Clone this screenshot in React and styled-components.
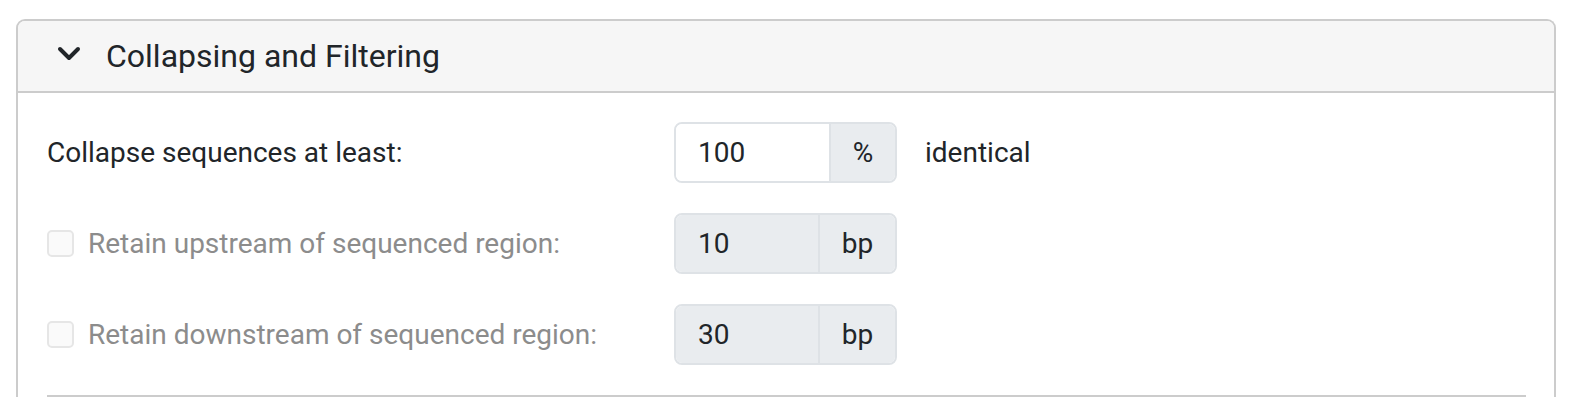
import React from "react";
import styled, { createGlobalStyle } from "styled-components";

const Global = createGlobalStyle`
  html, body { margin: 0; padding: 0; background: #fff; }
  body { font-family: Roboto, "Liberation Sans", sans-serif; color: #212529; }
`;

const Page = styled.div`
  padding: 19px 14px 0 16px;
`;

const Card = styled.section`
  border: 2px solid #cccccc;
  border-bottom: none;
  border-radius: 9px 9px 0 0;
  overflow: hidden;
`;

const Header = styled.div`
  display: flex;
  align-items: center;
  gap: 25px;
  height: 70px;
  padding: 0 0 0 39px;
  background: #f6f6f6;
  border-bottom: 2px solid #cccccc;
`;

const Chevron = styled.svg`
  width: 24px;
  height: 16px;
  margin-top: -4px;
  flex: none;
`;

const Title = styled.h2`
  margin: 0;
  font-size: 32px;
  font-weight: 400;
  color: #212529;
`;

const Body = styled.div`
  padding: 29px 28px 0 29px;
  display: flex;
  flex-direction: column;
`;

const Row = styled.div`
  display: flex;
  align-items: center;
  height: 61px;
  margin-bottom: 30px;
`;

const Label = styled.label`
  display: flex;
  align-items: center;
  gap: 14px;
  width: 627px;
  flex: none;
  font-size: 28px;
  color: ${(p) => (p.$disabled ? "#8c8c8c" : "#212529")};
`;

const Check = styled.span`
  width: 27px;
  height: 27px;
  box-sizing: border-box;
  border: 2px solid #e6e6e6;
  border-radius: 5px;
  background: #fafafa;
  flex: none;
`;

const Group = styled.div`
  display: flex;
  width: 223px;
  height: 61px;
  box-sizing: border-box;
  border: 2px solid #dee2e6;
  border-radius: 8px;
  overflow: hidden;
  flex: none;
`;

const Value = styled.div`
  flex: 1;
  display: flex;
  align-items: center;
  padding-left: 22px;
  font-size: 28px;
  background: ${(p) => (p.$disabled ? "#e9ecef" : "#ffffff")};
  color: #212529;
`;

const Addon = styled.div`
  width: ${(p) => p.$w}px;
  flex: none;
  display: flex;
  align-items: center;
  justify-content: center;
  border-left: 2px solid #dee2e6;
  background: #e9ecef;
  font-size: 28px;
  color: #212529;
`;

const After = styled.span`
  margin-left: 28px;
  font-size: 28px;
  color: #212529;
`;

const Divider = styled.hr`
  margin: 0;
  border: none;
  height: 2px;
  background: #cccccc;
`;

export default function App() {
  return (
    <>
      <Global />
      <Page>
        <Card>
          <Header>
            <Chevron viewBox="0 0 24 16">
              <path d="M3 3 L12 12 L21 3" fill="none" stroke="#212529" strokeWidth="4" strokeLinecap="round" strokeLinejoin="round" />
            </Chevron>
            <Title>Collapsing and Filtering</Title>
          </Header>
          <Body>
            <Row>
              <Label>Collapse sequences at least:</Label>
              <Group>
                <Value>100</Value>
                <Addon $w={64}>%</Addon>
              </Group>
              <After>identical</After>
            </Row>
            <Row>
              <Label $disabled>
                <Check />
                Retain upstream of sequenced region:
              </Label>
              <Group>
                <Value $disabled>10</Value>
                <Addon $w={75}>bp</Addon>
              </Group>
            </Row>
            <Row>
              <Label $disabled>
                <Check />
                Retain downstream of sequenced region:
              </Label>
              <Group>
                <Value $disabled>30</Value>
                <Addon $w={75}>bp</Addon>
              </Group>
            </Row>
            <Divider />
          </Body>
        </Card>
      </Page>
    </>
  );
}
